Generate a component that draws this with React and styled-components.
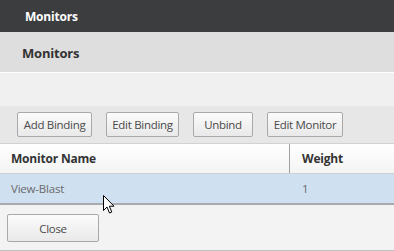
import React from 'react';
import styled, { createGlobalStyle } from 'styled-components';

const GlobalStyle = createGlobalStyle`
  html, body {
    margin: 0;
    padding: 0;
    background: #f3f3f3;
  }
  body {
    font-family: "Open Sans", "Noto Sans", sans-serif;
  }
`;

const Page = styled.div`
  position: relative;
  width: 394px;
  height: 251px;
  overflow: hidden;
  display: flex;
  flex-direction: column;
  background: #f3f3f3;
`;

const TopBar = styled.div`
  height: 32px;
  display: flex;
  align-items: center;
  padding-left: 25px;
  background: #3c3d3f;
  color: #ffffff;
  font-size: 12px;
  font-weight: 700;
  letter-spacing: -0.2px;
`;

const SubHeader = styled.div`
  height: 39px;
  display: flex;
  align-items: center;
  padding: 1px 0 0 22px;
  background: #dedede;
  border-bottom: 1px solid #ffffff;
  color: #333;
  font-size: 13px;
  font-weight: 700;
  letter-spacing: -0.2px;
`;

const Spacer = styled.div`
  height: 33px;
  background: #f0f0f0;
`;

const Toolbar = styled.div`
  height: 38px;
  display: flex;
  align-items: flex-start;
  gap: 14px;
  padding: 6px 0 0 17px;
  box-sizing: border-box;
  background: #e7e7e7;
  border-bottom: 1px solid #d2d2d2;
`;

const Button = styled.button`
  box-sizing: border-box;
  width: ${(p) => p.$w}px;
  height: ${(p) => p.$h || 25}px;
  padding: 0;
  border: 1px solid #a9a9a9;
  border-radius: 2px;
  background: linear-gradient(#fbfbfb, #e9e9e9);
  color: #4a4a4a;
  font-family: "Open Sans", "Noto Sans", sans-serif;
  font-size: 11.5px;
  letter-spacing: -0.3px;
  cursor: default;
`;

const Table = styled.div`
  display: flex;
  flex-direction: column;
`;

const HeaderRow = styled.div`
  height: 29px;
  display: grid;
  grid-template-columns: 289px 1fr;
  background: linear-gradient(#ffffff, #f4f4f4);
  border-bottom: 1px solid #cfcfcf;
`;

const HeaderCell = styled.div`
  display: flex;
  align-items: center;
  padding-left: ${(p) => p.$pad}px;
  color: #333;
  font-size: 12px;
  font-weight: 700;
  letter-spacing: -0.2px;
  border-left: ${(p) => (p.$divider ? '1px solid #a0a0a0' : 'none')};
`;

const DataRow = styled.div`
  height: 29px;
  display: grid;
  grid-template-columns: 289px 1fr;
  background: #cfe0f1;
  border-bottom: 2px solid #a8acb1;
`;

const DataCell = styled.div`
  display: flex;
  align-items: center;
  padding-left: ${(p) => p.$pad}px;
  color: #6a6a6a;
  font-size: 11.5px;
  letter-spacing: -0.2px;
`;

const Footer = styled.div`
  flex: 1;
  padding: 9px 0 0 7px;
  background: #f3f3f3;
  border-bottom: 1px solid #c0c0c0;
`;

const Cursor = styled.svg`
  position: absolute;
  left: 103px;
  top: 195px;
`;

export default function App() {
  return (
    <Page>
      <GlobalStyle />
      <TopBar>Monitors</TopBar>
      <SubHeader>Monitors</SubHeader>
      <Spacer />
      <Toolbar>
        <Button $w={75}>Add Binding</Button>
        <Button $w={73}>Edit Binding</Button>
        <Button $w={60}>Unbind</Button>
        <Button $w={76}>Edit Monitor</Button>
      </Toolbar>
      <Table>
        <HeaderRow>
          <HeaderCell $pad={11}>Monitor Name</HeaderCell>
          <HeaderCell $pad={12} $divider>Weight</HeaderCell>
        </HeaderRow>
        <DataRow>
          <DataCell $pad={11}>View-Blast</DataCell>
          <DataCell $pad={13}>1</DataCell>
        </DataRow>
      </Table>
      <Footer>
        <Button $w={92} $h={28}>Close</Button>
      </Footer>
      <Cursor width="13" height="20" viewBox="0 0 13 20">
        <path
          d="M0.5 0.5 L0.5 15.5 L4 12 L6.5 18 L8.8 17 L6.3 11.2 L11 11.2 Z"
          fill="#ffffff"
          stroke="#000000"
          strokeWidth="1"
          strokeLinejoin="miter"
        />
      </Cursor>
    </Page>
  );
}
